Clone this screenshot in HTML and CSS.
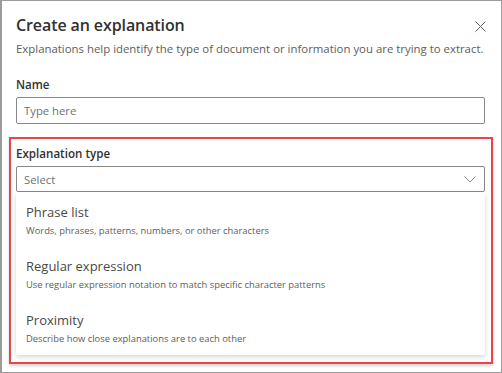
FILE: index.html
```html
<!DOCTYPE html>
<html lang="en">
<head>
    <meta charset="UTF-8">
    <title>Create an explanation</title>
    <link rel="stylesheet" href="styles.css">
</head>
<body>
    <div class="dialog">
        <div class="header">
            <div class="title-row">
                <h1 class="title">Create an explanation</h1>
                <button class="close-btn" aria-label="Close">
                    <svg width="11" height="11" viewBox="0 0 11 11">
                        <path d="M0.5 0.5 L10.5 10.5 M10.5 0.5 L0.5 10.5" stroke="#605e5c" stroke-width="1" fill="none"/>
                    </svg>
                </button>
            </div>
            <p class="subtitle">Explanations help identify the type of document or information you are trying to extract.</p>

            <label class="field-label">Name</label>
            <div class="input">Type here</div>
        </div>

        <div class="highlight">
            <label class="field-label">Explanation type</label>
            <div class="select">
                <span>Select</span>
                <svg width="12" height="7" viewBox="0 0 12 7">
                    <path d="M0.5 0.5 L6 6 L11.5 0.5" stroke="#8a8886" stroke-width="1" fill="none"/>
                </svg>
            </div>
            <div class="dropdown">
                <div class="option">
                    <div class="option-title">Phrase list</div>
                    <div class="option-desc">Words, phrases, patterns, numbers, or other characters</div>
                </div>
                <div class="option">
                    <div class="option-title">Regular expression</div>
                    <div class="option-desc">Use regular expression notation to match specific character patterns</div>
                </div>
                <div class="option">
                    <div class="option-title">Proximity</div>
                    <div class="option-desc">Describe how close explanations are to each other</div>
                </div>
            </div>
        </div>
    </div>
</body>
</html>
```

FILE: styles.css
```css
body {
    margin: 0;
    font-family: 'Open Sans', 'Noto Sans', sans-serif;
    color: #323130;
    background: #fff;
}

.dialog {
    width: 502px;
    height: 373px;
    box-sizing: border-box;
    border: 1px solid #9b9b9b;
    border-left-width: 2px;
    padding: 0 8px 0 7px;
    overflow: hidden;
}

.header {
    padding: 11px 7px 0 7px;
}

.title-row {
    display: flex;
    align-items: center;
    justify-content: space-between;
}

.title {
    margin: 0;
    font-size: 16px;
    font-weight: 600;
    line-height: 26px;
    letter-spacing: -0.1px;
    color: #323130;
}

.close-btn {
    border: none;
    background: none;
    padding: 0;
    margin-top: 3px;
    display: flex;
}

.subtitle {
    margin: 1px 0 0 0;
    font-size: 11.4px;
    line-height: 20px;
    color: #605e5c;
    white-space: nowrap;
}

.field-label {
    display: block;
    font-size: 11.6px;
    font-weight: 600;
    line-height: 20px;
    color: #323130;
}

.header .field-label {
    margin-top: 16px;
}

.input {
    margin-top: 2px;
    width: 469px;
    height: 27px;
    box-sizing: border-box;
    border: 1px solid #8a8886;
    border-radius: 2px;
    padding: 0 7px;
    font-size: 11.3px;
    line-height: 25px;
    color: #707070;
}

.highlight {
    margin-top: 13px;
    border: 2px solid #e8444a;
    padding: 5px 6px 7px 5px;
    box-shadow: 0 2px 3px rgba(0, 0, 0, 0.18);
}

.highlight .field-label {
    margin-bottom: 2px;
}

.select {
    height: 26px;
    box-sizing: border-box;
    border: 1px solid #8a8886;
    border-radius: 2px;
    padding: 0 8px 0 7px;
    display: flex;
    align-items: center;
    justify-content: space-between;
    font-size: 11.3px;
    color: #707070;
}

.dropdown {
    height: 163px;
    box-sizing: border-box;
    padding: 9px 10px 10px 10px;
    background: #fff;
    box-shadow: 0 2px 5px rgba(0, 0, 0, 0.16);
    border-radius: 0 0 2px 2px;
}

.option + .option {
    margin-top: 16px;
}

.option-title {
    font-size: 13px;
    line-height: 22px;
    color: #4a4846;
}

.option-desc {
    font-size: 9.4px;
    line-height: 16px;
    color: #605e5c;
}
```
